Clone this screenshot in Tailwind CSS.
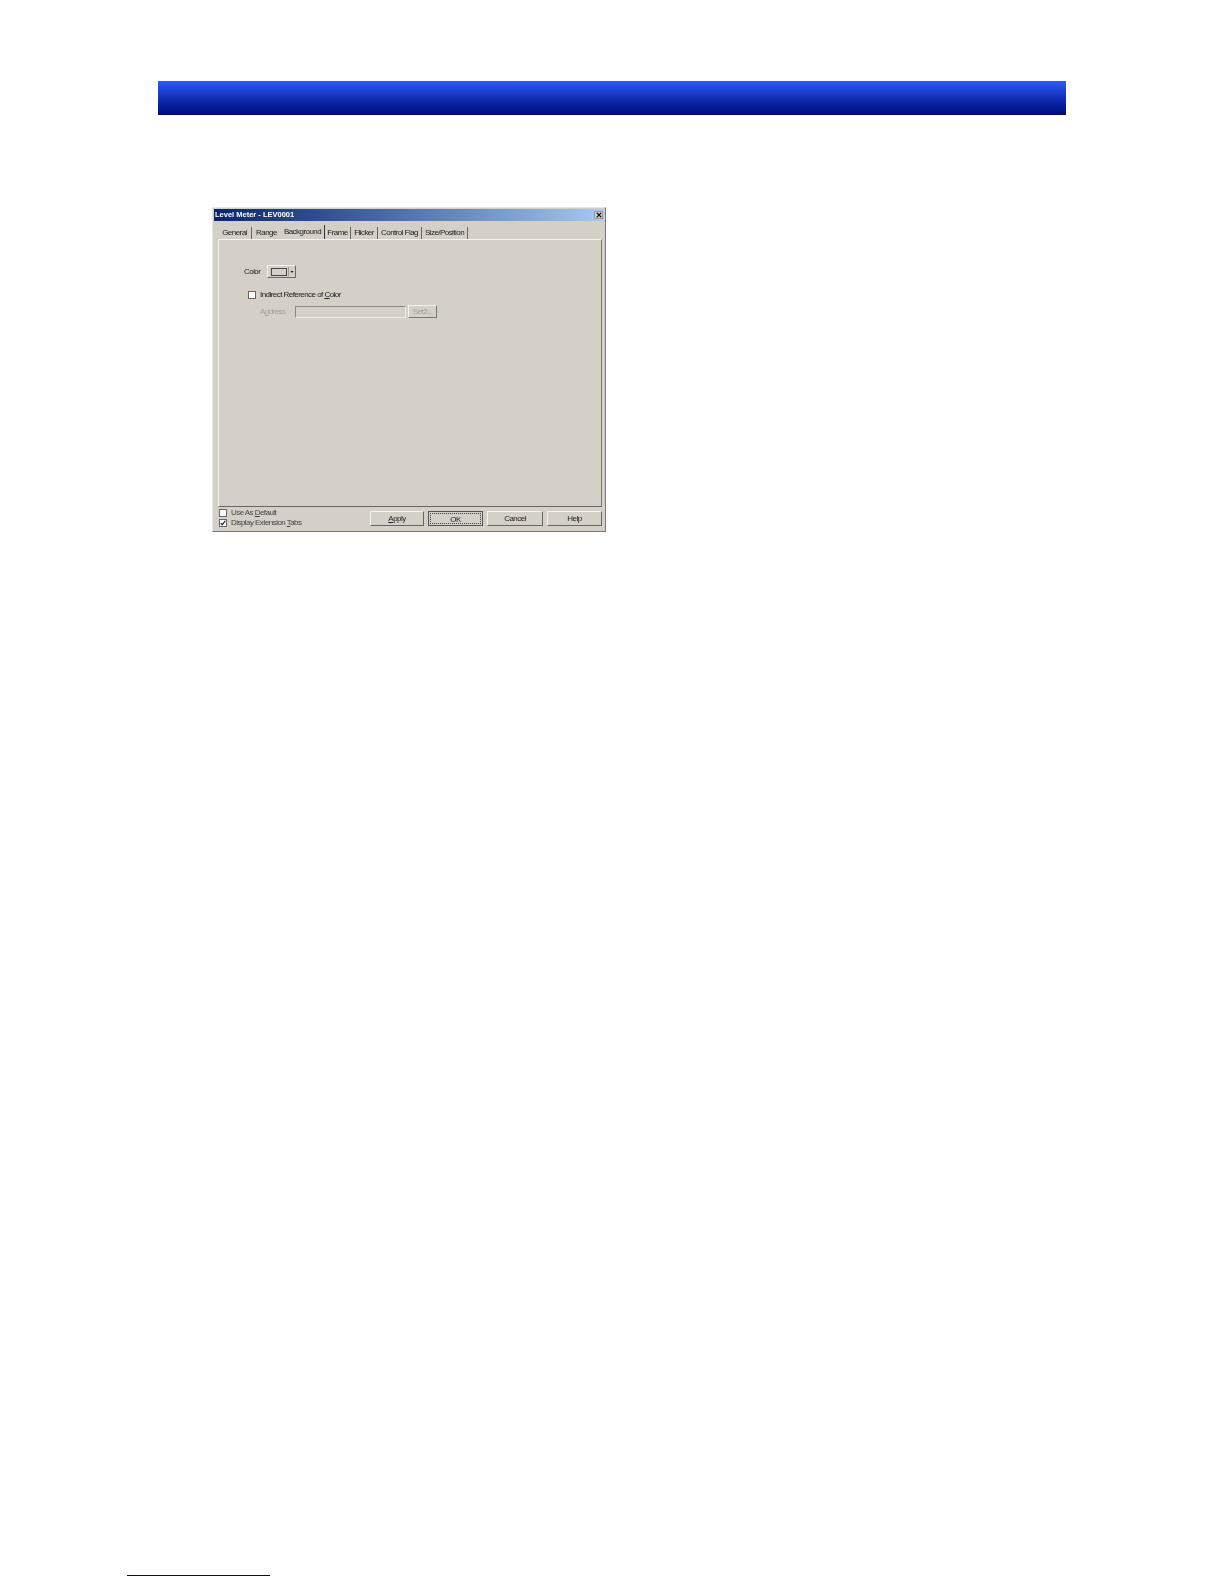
<!DOCTYPE html>
<html><head><meta charset="utf-8"><script src="https://cdn.jsdelivr.net/npm/@tailwindcss/browser@4"></script></head>
<body class="bg-white">
<div class="w-[1224px] h-[1584px] overflow-hidden bg-white flex flex-col font-['Liberation_Sans',sans-serif]">
  <div class="ml-[158px] mt-[81px] w-[908px] h-[34px] bg-gradient-to-b from-[#2f5cf0] via-[#1230b8] to-[#00087a] shrink-0"></div>

  <div class="ml-[212px] mt-[92px] w-[394px] h-[325px] shrink-0 flex flex-col bg-[#d4d0c8] border border-[#777] border-t-[#e8e6e0] border-l-[#e8e6e0] text-[8px] leading-[10px] tracking-[-0.55px] text-[#222] blur-[0.45px]">
    <div class="mx-[1px] mt-[1px] h-[12px] shrink-0 flex items-center justify-between bg-gradient-to-r from-[#0a246a] to-[#a6caf0] pl-[1px] pr-[1px]">
      <span class="font-bold text-[7.5px] text-white tracking-normal">Level Meter - LEV0001</span>
      <span class="w-[9px] h-[8px] flex items-center justify-center bg-[#d4d0c8] border border-[#999]">
        <svg viewBox="0 0 8 8" class="w-[6px] h-[6px]"><path d="M1 1L7 7M7 1L1 7" stroke="#111" stroke-width="1.5" fill="none"/></svg>
      </span>
    </div>

    <div class="flex items-end ml-[5px] h-[18px] shrink-0">
      <span class="w-[34px] h-[12px] leading-[12px] text-center border-r border-[#666]">General</span>
      <span class="w-[29px] h-[12px] leading-[12px] text-center">Range</span>
      <span class="w-[44px] h-[14px] leading-[14px] text-center border-r border-[#333]">Background</span>
      <span class="w-[26px] h-[12px] leading-[12px] text-center border-r border-[#666]">Frame</span>
      <span class="w-[27px] h-[12px] leading-[12px] text-center border-r border-[#666]">Flicker</span>
      <span class="w-[44px] h-[12px] leading-[12px] text-center border-r border-[#666]">Control Flag</span>
      <span class="w-[46px] h-[12px] leading-[12px] text-center border-r border-[#666]">Size/Position</span>
    </div>

    <div class="ml-[5px] w-[384px] h-[268px] shrink-0 border border-[#f4f3ef] border-r-[#777] border-b-[#666] pl-[25px] pt-[25px] flex flex-col">
      <div class="flex items-center h-[13px]">
        <span class="w-[23px]">Color</span>
        <span class="w-[29px] h-[13px] flex items-center pl-[3px] border border-[#f4f3ef] border-r-[#666] border-b-[#666]">
          <span class="w-[16px] h-[8px] bg-[#d4d0c8] border border-[#444]"></span>
          <span class="ml-[1px] h-[9px] border-l border-[#999]"></span>
          <svg viewBox="0 0 5 3" class="ml-[1px] w-[4px] h-[2px]"><path d="M0 0H5L2.5 3Z" fill="#222"/></svg>
        </span>
      </div>
      <div class="flex items-center h-[10px] mt-[12px] ml-[4px] gap-[4px]">
        <span class="w-[8px] h-[8px] bg-white border border-[#666]"></span>
        <span>Indirect Reference of <u>C</u>olor</span>
      </div>
      <div class="flex items-center h-[13px] mt-[5px] ml-[16px] text-[#a09e96]">
        <span class="w-[35px]">A<u>d</u>dress</span>
        <span class="w-[111px] h-[12px] border border-[#8a8880] border-r-[#eee] border-b-[#eee]"></span>
        <span class="ml-[2px] w-[29px] h-[13px] leading-[11px] text-center border border-[#f4f3ef] border-r-[#777] border-b-[#777]">Set2...</span>
      </div>
    </div>

    <div class="flex items-start ml-[6px]">
      <div class="flex flex-col w-[151px] mt-[1px] text-[#444]">
        <div class="flex items-center gap-[4px] h-[10px]">
          <span class="w-[8px] h-[8px] bg-white border border-[#666]"></span><span>Use As <u>D</u>efault</span>
        </div>
        <div class="flex items-center gap-[4px] h-[10px]">
          <span class="w-[8px] h-[8px] bg-white border border-[#666] flex items-center justify-center">
            <svg viewBox="0 0 8 8" class="w-[6px] h-[6px]"><path d="M1 4L3 6.5L7 1" stroke="#111" stroke-width="1.6" fill="none"/></svg>
          </span><span>Display Extension <u>T</u>abs</span>
        </div>
      </div>
      <div class="flex gap-[4px] mt-[4px]">
        <span class="w-[54px] h-[15px] leading-[13px] text-center border border-[#f4f3ef] border-r-[#666] border-b-[#666]"><u>A</u>pply</span>
        <span class="w-[55px] h-[15px] leading-[11px] text-center border border-[#555] p-[1px]"><span class="block h-full border border-dotted border-[#444]">OK</span></span>
        <span class="w-[56px] h-[15px] leading-[13px] text-center border border-[#f4f3ef] border-r-[#666] border-b-[#666]">Cancel</span>
        <span class="w-[55px] h-[15px] leading-[13px] text-center border border-[#f4f3ef] border-r-[#666] border-b-[#666]">Help</span>
      </div>
    </div>
  </div>

  <div class="ml-[127px] mt-[1043px] w-[143px] h-px bg-[#000080] shrink-0"></div>
</div>
</body></html>
